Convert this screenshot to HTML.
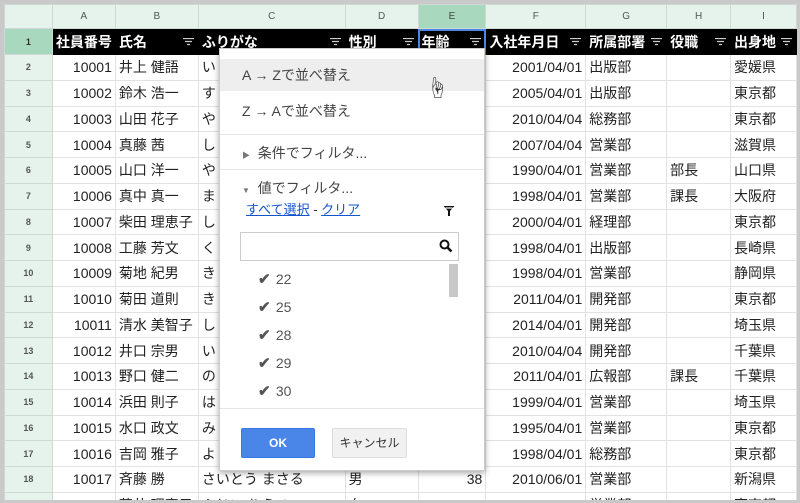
<!DOCTYPE html>
<html><head><meta charset="utf-8"><style>
*{box-sizing:border-box;margin:0;padding:0}
body{width:800px;height:503px;overflow:hidden;background:#c9c9c9;font-family:"Liberation Sans","Noto Sans CJK JP",sans-serif;position:relative}
#wrap{position:absolute;left:4px;top:4px;width:793px;height:496px;background:#fff;overflow:hidden}
table{border-collapse:collapse;table-layout:fixed;position:absolute;left:0;top:0}
td{border:1px solid #e2e2e2;height:25.75px;font-size:14px;color:#222;white-space:nowrap;overflow:hidden;padding:0 3px;line-height:20px}
tr.ch td{height:24px;background:#e6f3ec;color:#555;font-size:10px;text-align:center;border-color:#cfd8d2}
tr.ch td.sel{background:#a8d8bd;color:#444}
td.rh{background:#e6f3ec;color:#555;font-size:9px;text-align:center;font-weight:bold;border-color:#cfd8d2}
tr.h td{background:#000;color:#fff;font-weight:bold;font-size:14px;border-color:#000;position:relative;height:26px}
tr.h td.rh{background:#a8d8bd;color:#333;border-color:#cfd8d2;font-size:9px}
tr.h td svg{position:absolute;right:4px;top:9px}
.r{text-align:right}
#menu{position:absolute;left:215px;top:44px;width:266px;height:423px;background:#fff;box-shadow:0 2px 6px rgba(0,0,0,.35);border:1px solid #ccc;font-size:14px;color:#444}
.it{position:absolute;left:0;width:100%;padding-left:22px}
.sep{position:absolute;left:0;width:100%;border-top:1px solid #e5e5e5}
.chk{position:absolute;left:38px;font-size:14px;color:#555}
.chk b{display:inline-block;width:14px;color:#555;font-size:15px}
.btn{position:absolute;top:379px;height:30px;font-size:12px;font-weight:bold;text-align:center;line-height:28px;border-radius:2px}
</style></head><body><div id="wrap">
<svg width="0" height="0" style="position:absolute"><defs><g id="fi"><path d="M0 0.5H11M2 3.5H9M4 6.5H7" stroke="#ccc" stroke-width="1.2"/></g></defs></svg>
<table>
<colgroup><col style="width:48px"><col style="width:63px"><col style="width:83px"><col style="width:147px"><col style="width:73px"><col style="width:68px"><col style="width:100px"><col style="width:81px"><col style="width:64px"><col style="width:66px"></colgroup>
<tr class="ch"><td></td><td>A</td><td>B</td><td>C</td><td>D</td><td class="sel">E</td><td>F</td><td>G</td><td>H</td><td>I</td></tr>
<tr class="h"><td class="rh">1</td><td>社員番号<svg width="11" height="8"><use href="#fi"/></svg></td><td>氏名<svg width="11" height="8"><use href="#fi"/></svg></td><td>ふりがな<svg width="11" height="8"><use href="#fi"/></svg></td><td>性別<svg width="11" height="8"><use href="#fi"/></svg></td><td style="outline:2px solid #4a86e8;outline-offset:-2px">年齢<svg width="11" height="8"><use href="#fi"/></svg></td><td>入社年月日<svg width="11" height="8"><use href="#fi"/></svg></td><td>所属部署<svg width="11" height="8"><use href="#fi"/></svg></td><td>役職<svg width="11" height="8"><use href="#fi"/></svg></td><td>出身地<svg width="11" height="8"><use href="#fi"/></svg></td></tr>
<tr><td class="rh">2</td><td class="r">10001</td><td>井上 健語</td><td>い</td><td></td><td></td><td class="r">2001/04/01</td><td>出版部</td><td></td><td>愛媛県</td></tr>
<tr><td class="rh">3</td><td class="r">10002</td><td>鈴木 浩一</td><td>す</td><td></td><td></td><td class="r">2005/04/01</td><td>出版部</td><td></td><td>東京都</td></tr>
<tr><td class="rh">4</td><td class="r">10003</td><td>山田 花子</td><td>や</td><td></td><td></td><td class="r">2010/04/04</td><td>総務部</td><td></td><td>東京都</td></tr>
<tr><td class="rh">5</td><td class="r">10004</td><td>真藤 茜</td><td>し</td><td></td><td></td><td class="r">2007/04/04</td><td>営業部</td><td></td><td>滋賀県</td></tr>
<tr><td class="rh">6</td><td class="r">10005</td><td>山口 洋一</td><td>や</td><td></td><td></td><td class="r">1990/04/01</td><td>営業部</td><td>部長</td><td>山口県</td></tr>
<tr><td class="rh">7</td><td class="r">10006</td><td>真中 真一</td><td>ま</td><td></td><td></td><td class="r">1998/04/01</td><td>営業部</td><td>課長</td><td>大阪府</td></tr>
<tr><td class="rh">8</td><td class="r">10007</td><td>柴田 理恵子</td><td>し</td><td></td><td></td><td class="r">2000/04/01</td><td>経理部</td><td></td><td>東京都</td></tr>
<tr><td class="rh">9</td><td class="r">10008</td><td>工藤 芳文</td><td>く</td><td></td><td></td><td class="r">1998/04/01</td><td>出版部</td><td></td><td>長崎県</td></tr>
<tr><td class="rh">10</td><td class="r">10009</td><td>菊地 紀男</td><td>き</td><td></td><td></td><td class="r">1998/04/01</td><td>営業部</td><td></td><td>静岡県</td></tr>
<tr><td class="rh">11</td><td class="r">10010</td><td>菊田 道則</td><td>き</td><td></td><td></td><td class="r">2011/04/01</td><td>開発部</td><td></td><td>東京都</td></tr>
<tr><td class="rh">12</td><td class="r">10011</td><td>清水 美智子</td><td>し</td><td></td><td></td><td class="r">2014/04/01</td><td>開発部</td><td></td><td>埼玉県</td></tr>
<tr><td class="rh">13</td><td class="r">10012</td><td>井口 宗男</td><td>い</td><td></td><td></td><td class="r">2010/04/04</td><td>開発部</td><td></td><td>千葉県</td></tr>
<tr><td class="rh">14</td><td class="r">10013</td><td>野口 健二</td><td>の</td><td></td><td></td><td class="r">2011/04/01</td><td>広報部</td><td>課長</td><td>千葉県</td></tr>
<tr><td class="rh">15</td><td class="r">10014</td><td>浜田 則子</td><td>は</td><td></td><td></td><td class="r">1999/04/01</td><td>営業部</td><td></td><td>埼玉県</td></tr>
<tr><td class="rh">16</td><td class="r">10015</td><td>水口 政文</td><td>み</td><td></td><td></td><td class="r">1995/04/01</td><td>営業部</td><td></td><td>東京都</td></tr>
<tr><td class="rh">17</td><td class="r">10016</td><td>吉岡 雅子</td><td>よ</td><td></td><td></td><td class="r">1998/04/01</td><td>総務部</td><td></td><td>東京都</td></tr>
<tr><td class="rh">18</td><td class="r">10017</td><td>斉藤 勝</td><td>さいとう まさる</td><td>男</td><td class="r">38</td><td class="r">2010/06/01</td><td>営業部</td><td></td><td>新潟県</td></tr>
<tr><td class="rh">19</td><td class="r">10018</td><td>藤井 理恵子</td><td>ふじい りえこ</td><td>女</td><td class="r">29</td><td class="r">2012/04/01</td><td>営業部</td><td></td><td>東京都</td></tr>
</table>
<div id="menu">
<div style="position:absolute;left:0;top:10px;width:100%;height:32px;background:#eee"></div>
<div class="it" style="top:16px">A → Zで並べ替え</div>
<div style="position:absolute;left:206px;top:22px;font-size:22px;color:#333">☝</div>
<div class="it" style="top:52px">Z → Aで並べ替え</div>
<div class="sep" style="top:85px"></div>
<div class="it" style="top:94px"><span style="font-size:8px;color:#777">▶</span>&nbsp; 条件でフィルタ...</div>
<div class="sep" style="top:120px"></div>
<div class="it" style="top:129px"><span style="font-size:8px;color:#777">▼</span>&nbsp; 値でフィルタ...</div>
<div style="position:absolute;left:26px;top:150px;font-size:13px;color:#1155cc"><u>すべて選択</u> <span style="color:#333">-</span> <u>クリア</u></div>
<svg style="position:absolute;left:223px;top:156px" width="12" height="12"><path d="M0.5 1H11.5L7 6V11H5V6Z" fill="#111"/><path d="M2.5 3H9.5" stroke="#fff" stroke-width="1.2"/></svg>
<div style="position:absolute;left:20px;top:183px;width:219px;height:29px;border:1px solid #ccc"></div>
<svg style="position:absolute;left:219px;top:190px" width="14" height="14"><circle cx="5.5" cy="5.5" r="4" fill="none" stroke="#111" stroke-width="2"/><path d="M8.5 8.5 L12.5 12.5" stroke="#111" stroke-width="2.5"/></svg>
<div style="position:absolute;left:229px;top:215px;width:9px;height:33px;background:#c8c8c8"></div>
<div class="chk" style="top:221px"><b>✔</b> 22</div>
<div class="chk" style="top:249px"><b>✔</b> 25</div>
<div class="chk" style="top:277px"><b>✔</b> 28</div>
<div class="chk" style="top:305px"><b>✔</b> 29</div>
<div class="chk" style="top:333px"><b>✔</b> 30</div>
<div class="sep" style="top:359px"></div>
<div class="btn" style="left:21px;width:74px;background:#4a86e8;color:#fff;border:1px solid #3b78e7">OK</div>
<div class="btn" style="left:112px;width:75px;background:#f1f1f1;color:#333;border:1px solid #ddd;font-weight:normal">キャンセル</div>
</div>
</div></body></html>
